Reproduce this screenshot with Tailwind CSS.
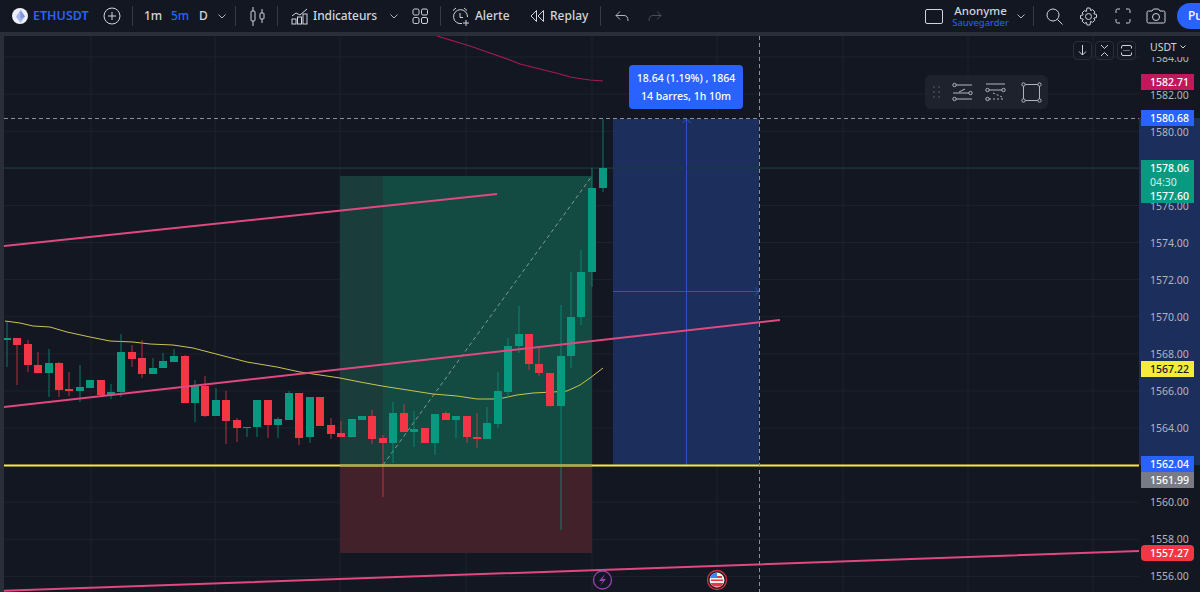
<!DOCTYPE html>
<html lang="fr">
<head>
<meta charset="UTF-8" />
<title>ETHUSDT</title>
<script src="https://cdn.jsdelivr.net/npm/@tailwindcss/browser@4"></script>
</head>
<body class="bg-[#131722] text-[#d1d4dc] font-['Noto_Sans',sans-serif] overflow-hidden">
<div class="w-[1200px] h-[592px] flex flex-col overflow-hidden">

  <!-- top toolbar -->
  <header class="h-8 flex items-center shrink-0 text-[12px] font-medium whitespace-nowrap *:shrink-0">
    <span class="ml-3 w-4 h-4 rounded-full bg-[#eef0f8] flex items-center justify-center">
      <svg width="9" height="13" viewBox="0 0 9 13"><path d="M4.500 0 9 6.500 4.500 13 0 6.500z" fill="#a9b8ee"/><path d="M4.500 0 9 6.500 4.500 9z" fill="#7f93e0"/></svg>
    </span>
    <span class="ml-[5px] w-[58px] text-[12.500px] text-[#2962ff] font-semibold">ETHUSDT</span>
    <svg class="ml-[12px]" width="18" height="18" viewBox="0 0 18 18" fill="none" stroke="#d1d4dc"><circle cx="9" cy="9" r="8"/><path d="M9 5v8M5 9h8"/></svg>
    <span class="ml-[11px] w-px h-5 bg-[#363a45]"></span>
    <span class="ml-[11px] w-4">1m</span>
    <span class="ml-[11px] w-[17px] text-[#2962ff]">5m</span>
    <span class="ml-[11px] w-2">D</span>
    <svg class="ml-[11px]" width="8" height="5" viewBox="0 0 8 5" fill="none" stroke="#b2b5be"><path d="M.5.5 4 4 7.5.5"/></svg>
    <span class="ml-[9px] w-px h-5 bg-[#363a45]"></span>
    <svg class="ml-[14px]" width="15" height="19" viewBox="0 0 15 19" fill="none" stroke="#d1d4dc"><rect x="1" y="4" width="4" height="10" rx="1"/><path d="M3 0v4M3 14v5"/><rect x="10" y="6" width="4" height="6" rx="1"/><path d="M12 2v4M12 12v4"/></svg>
    <span class="ml-[12px] w-px h-5 bg-[#363a45]"></span>
    <svg class="ml-[13px]" width="17" height="17" viewBox="0 0 17 17" fill="none" stroke="#d1d4dc"><path d="M1 8l4-3 4 2 7-6"/><rect x="1" y="11" width="4" height="5"/><rect x="6.500" y="9" width="4" height="7"/><rect x="12" y="6" width="4" height="10"/></svg>
    <span class="ml-[5px] w-[64px] tracking-[-0.1px]">Indicateurs</span>
    <svg class="ml-[13px]" width="8" height="5" viewBox="0 0 8 5" fill="none" stroke="#b2b5be"><path d="M.5.5 4 4 7.5.5"/></svg>
    <svg class="ml-[14px]" width="16" height="16" viewBox="0 0 16 16" fill="none" stroke="#d1d4dc"><rect x="1" y="1" width="6" height="6" rx="1.500"/><rect x="9.500" y="1" width="6" height="6" rx="1.500"/><rect x="1" y="9.500" width="6" height="6" rx="1.500"/><rect x="9.500" y="9.500" width="6" height="6" rx="1.500"/></svg>
    <span class="ml-[12px] w-px h-5 bg-[#363a45]"></span>
    <svg class="ml-[11px]" width="18" height="19" viewBox="0 0 18 19" fill="none" stroke="#d1d4dc"><path d="M10 16.500A7 7 0 1 1 15.500 10"/><path d="M8 6v4.500h3M1 3.500 4 1M15 3.500 12 1M14 13v6M11 16h6"/></svg>
    <span class="ml-[5px] w-[36px]">Alerte</span>
    <svg class="ml-[19px]" width="14" height="12" viewBox="0 0 14 12" fill="none" stroke="#d1d4dc"><path d="M6.500.500 1 6l5.500 5.500zM13.500.500 8 6l5.500 5.500z"/></svg>
    <span class="ml-[6px] w-[38px]">Replay</span>
    <span class="ml-3 w-px h-5 bg-[#363a45]"></span>
    <svg class="ml-[14px]" width="14" height="11" viewBox="0 0 14 11" fill="none" stroke="#b2b5be"><path d="M5 .500 1 4.500l4 4M1 4.500h8c3 0 4 2 4 5.500"/></svg>
    <svg class="ml-[19px]" width="14" height="11" viewBox="0 0 14 11" fill="none" stroke="#4a4e59"><path d="M9 .500l4 4-4 4M13 4.500H5C2 4.500 1 6.500 1 10"/></svg>

    <svg class="ml-[263px]" width="18" height="15" viewBox="0 0 18 15" fill="none" stroke="#d1d4dc"><rect x=".5" y=".5" width="17" height="14" rx="1.500"/></svg>
    <span class="ml-3 w-[51px] flex flex-col items-center">
      <span class="text-[11.500px] leading-[12px]">Anonyme</span>
      <span class="text-[9.500px] leading-[11px] font-normal text-[#2962ff]">Sauvegarder</span>
    </span>
    <svg class="ml-[11px]" width="8" height="5" viewBox="0 0 8 5" fill="none" stroke="#b2b5be"><path d="M.5.5 4 4 7.5.5"/></svg>
    <span class="ml-2 w-px h-5 bg-[#363a45]"></span>
    <svg class="ml-3" width="17" height="17" viewBox="0 0 17 17" fill="none" stroke="#d1d4dc"><circle cx="7" cy="7" r="6"/><path d="m11.500 11.500 5 5"/></svg>
    <svg class="ml-[16px]" width="19" height="19" viewBox="0 0 19 19" fill="none" stroke="#d1d4dc"><circle cx="9.500" cy="9.500" r="3"/><path d="M8 1h3l.6 2.500 2-.9 2.200 2.200-1 2 2.700.7v3l-2.700.7 1 2-2.200 2.200-2-1L11 18H8l-.6-2.600-2 1-2.200-2.200 1-2L1.500 11.500v-3l2.700-.7-1-2 2.200-2.200 2 .9z"/></svg>
    <svg class="ml-[17px]" width="16" height="16" viewBox="0 0 16 16" fill="none" stroke="#d1d4dc"><path d="M1 5V2.500A1.500 1.500 0 0 1 2.500 1H5M11 1h2.500A1.500 1.500 0 0 1 15 2.500V5M15 11v2.500a1.500 1.500 0 0 1-1.500 1.500H11M5 15H2.500A1.500 1.500 0 0 1 1 13.500V11"/></svg>
    <svg class="ml-[15px]" width="20" height="16" viewBox="0 0 20 16" fill="none" stroke="#d1d4dc"><path d="M1 4.500A1.500 1.500 0 0 1 2.500 3H6l1.500-2h5L14 3h3.500A1.500 1.500 0 0 1 19 4.500v9a1.500 1.500 0 0 1-1.500 1.500h-15A1.500 1.500 0 0 1 1 13.500z"/><circle cx="10" cy="9" r="3.500"/></svg>
    <span class="ml-[11px] w-[23px] h-[26px] rounded-l-[13px] bg-[#2962ff] text-white pl-[11px] flex items-center">Pu</span>
  </header>
  <div class="h-1 shrink-0 bg-[#2a2e39]"></div>

  <!-- chart and price scale -->
  <main class="flex flex-1 min-h-0">
    <div class="w-1 shrink-0 bg-[#2a2e39]"></div>
    <section class="relative w-[1135px] shrink-0 overflow-hidden">
      <svg id="chart" class="absolute inset-0" width="1135" height="556" viewBox="4 36 1135 556"></svg>

      <div class="absolute left-[1069px] top-[5px] flex gap-[3px]">
        <span class="w-[19px] h-[19px] rounded border border-[#2a2e39] flex items-center justify-center">
          <svg width="9" height="11" viewBox="0 0 9 11" fill="none" stroke="#d1d4dc"><path d="M4.500 0v10M1 6.500l3.500 3.500L8 6.500"/></svg>
        </span>
        <span class="w-[19px] h-[19px] rounded border border-[#2a2e39] flex items-center justify-center">
          <svg width="9" height="13" viewBox="0 0 9 13" fill="none" stroke="#d1d4dc"><path d="m1 1 3.500 3.500L8 1M1 12l3.500-3.500L8 12"/></svg>
        </span>
        <span class="w-[19px] h-[19px] rounded border border-[#2a2e39] flex items-center justify-center">
          <svg width="11" height="11" viewBox="0 0 11 11" fill="none" stroke="#d1d4dc"><path d="M.5 3.500V2A1.500 1.500 0 0 1 2 .5h7A1.500 1.500 0 0 1 10.500 2v1.500M10.500 7.500V9A1.500 1.500 0 0 1 9 10.500H2A1.500 1.500 0 0 1 .5 9V7.500"/><path d="M2 5.500h7" stroke="#6a6e79"/></svg>
        </span>
      </div>

      <div class="absolute left-[625px] top-[29px] w-[114px] h-[44px] rounded bg-[#2962ff] text-white text-[10.500px] font-medium leading-[18px] flex flex-col items-center justify-center whitespace-nowrap">
        <span>18.64 (1.19%) , 1864</span>
        <span>14 barres, 1h 10m</span>
      </div>

      <div class="absolute left-[921px] top-[39px] w-[123px] h-[34px] rounded-md bg-[#1e222d] flex items-center">
        <svg class="ml-2" width="8" height="12" viewBox="0 0 8 12" fill="#4a4e59"><circle cx="1" cy="1" r="1"/><circle cx="6" cy="1" r="1"/><circle cx="1" cy="6" r="1"/><circle cx="6" cy="6" r="1"/><circle cx="1" cy="11" r="1"/><circle cx="6" cy="11" r="1"/></svg>
        <svg class="ml-[11px]" width="21" height="20" viewBox="0 0 21 20" fill="none" stroke="#b2b5be"><circle cx="2.500" cy="3" r="1.700"/><path d="M4 3h16M7 10l6-3" /><circle cx="18.500" cy="11" r="1.700"/><path d="M1 11h16"/><circle cx="2.500" cy="17" r="1.700"/><path d="M4 17h16"/></svg>
        <svg class="ml-[12px]" width="21" height="20" viewBox="0 0 21 20" fill="none" stroke="#b2b5be"><path d="M1 2h19"/><circle cx="2.500" cy="8" r="1.700"/><path d="M4 8h13"/><circle cx="18.500" cy="8" r="1.700"/><circle cx="2.500" cy="17" r="1.700"/><path d="M4 17h16M8 11l9 4" stroke-dasharray="2 2"/></svg>
        <svg class="ml-[15px]" width="21" height="21" viewBox="0 0 21 21" fill="none" stroke="#b2b5be"><rect x="2.500" y="2.500" width="16" height="16"/><circle cx="2.500" cy="2.500" r="1.700" fill="#1e222d"/><circle cx="18.500" cy="2.500" r="1.700" fill="#1e222d"/><circle cx="2.500" cy="18.500" r="1.700" fill="#1e222d"/><circle cx="18.500" cy="18.500" r="1.700" fill="#1e222d"/></svg>
      </div>
    </section>

    <!-- price scale -->
    <aside class="relative w-[61px] shrink-0 text-[10.500px] text-[#b2b5be] leading-4">
      <div class="absolute left-0 right-0 top-[82px] h-[347px] bg-[#1b2e5c]"></div>
      <span class="absolute left-[11px] top-[3px] flex items-center gap-[3px] text-[#d1d4dc]">USDT
        <svg width="6" height="4" viewBox="0 0 6 4" fill="none" stroke="#d1d4dc"><path d="M.5.5 3 3 5.500.5"/></svg>
      </span>
      <span class="absolute left-[11px] top-[21px] h-[5px] overflow-hidden"><span class="block -mt-[7px]">1584.00</span></span>
      <span class="absolute left-[11px] top-[51px]">1582.00</span>
      <span class="absolute left-[11px] top-[88px]">1580.00</span>
      <span class="absolute left-[11px] top-[162px]">1576.00</span>
      <span class="absolute left-[11px] top-[199px]">1574.00</span>
      <span class="absolute left-[11px] top-[236px]">1572.00</span>
      <span class="absolute left-[11px] top-[273px]">1570.00</span>
      <span class="absolute left-[11px] top-[310px]">1568.00</span>
      <span class="absolute left-[11px] top-[347px]">1566.00</span>
      <span class="absolute left-[11px] top-[384px]">1564.00</span>
      <span class="absolute left-[11px] top-[458px]">1560.00</span>
      <span class="absolute left-[11px] top-[495px]">1558.00</span>
      <span class="absolute left-[11px] top-[532px]">1556.00</span>

      <span class="absolute left-[2px] w-[53px] top-[38px] h-4 pl-[9px] font-medium bg-[#c2185b] text-white">1582.71</span>
      <span class="absolute left-[2px] w-[53px] top-[74px] h-4 pl-[9px] font-medium bg-[#2962ff] text-white">1580.68</span>
      <span class="absolute left-[2px] w-[53px] top-[124px] h-[43px] pl-[9px] pt-[1px] font-medium bg-[#089981] text-white leading-[14px] flex flex-col">
        <span>1578.06</span><span class="font-normal text-[#d5efe9]">04:30</span><span>1577.60</span>
      </span>
      <span class="absolute left-[2px] w-[53px] top-[325px] h-4 pl-[9px] font-medium bg-[#f5eb3b] text-[#131722]">1567.22</span>
      <span class="absolute left-[2px] w-[53px] top-[420px] h-4 pl-[9px] font-medium bg-[#2962ff] text-white">1562.04</span>
      <span class="absolute left-[2px] w-[53px] top-[436px] h-4 pl-[9px] font-medium bg-[#787b86] text-white">1561.99</span>
      <span class="absolute left-[2px] w-[53px] top-[509px] h-4 pl-[9px] font-medium rounded-sm bg-[#f23645] text-white">1557.27</span>
    </aside>
  </main>
</div>

<script>
  // x, body top, body bottom, wick top, wick bottom, g/r
  const bars = [
    [7,338,340,322,367,'g'],[17,338,345,338,385,'r'],[28,344,365,340,372,'r'],[38,365,373,352,373,'r'],
    [49,363,373,349,397,'g'],[59,363,390,362,397,'r'],[69,389,391,372,396,'r'],[80,387,391,365,402,'g'],
    [90,380,388,380,388,'g'],[101,380,395,380,395,'r'],[111,392,395,384,399,'g'],[121,352,392,334,397,'g'],
    [132,352,359,345,367,'r'],[142,358,374,340,378,'r'],[153,368,374,358,374,'g'],[163,361,368,353,368,'g'],
    [174,356,362,349,362,'g'],[185,356,403,355,403,'r'],[195,386,403,380,422,'g'],[205,386,416,376,417,'r'],
    [216,400,416,388,416,'g'],[226,400,421,391,444,'r'],[237,420,428,418,442,'r'],[247,427,428,427,437,'g'],
    [257,400,427,400,437,'g'],[268,400,425,400,438,'r'],[278,419,425,417,438,'g'],[289,393,420,391,420,'g'],
    [299,393,438,393,445,'r'],[310,397,437,397,443,'g'],[320,397,426,397,426,'r'],[331,425,434,418,439,'r'],
    [341,433,437,421,437,'r'],[352,419,437,419,437,'g'],[362,416,420,416,420,'g'],[372,416,439,410,444,'r'],
    [383,438,443,435,497,'r'],[393,413,443,402,463,'g'],[404,413,432,404,432,'r'],[414,429,432,411,447,'g'],
    [425,428,443,428,443,'r'],[435,414,443,414,455,'g'],[446,413,420,411,420,'r'],[456,416,420,416,438,'g'],
    [467,416,437,416,443,'r'],[477,437,439,413,448,'r'],[487,423,439,407,439,'g'],[498,391,424,372,428,'g'],
    [508,346,392,338,397,'g'],[519,334,346,306,353,'g'],[529,334,364,334,370,'r'],[539,364,373,348,376,'r'],
    [550,373,406,373,407,'r'],[561,356,406,305,530,'g'],[571,317,356,272,368,'g'],[581,272,317,250,325,'g'],
    [592,188,272,168,287,'g'],[603,168,188,119,192,'g']
  ];
  const col = { g: '#089981', r: '#f23645' };

  let s = '';
  // grid
  for (const x of [91,215,340,466,592,717,843,968,1093])
    s += `<path d="M${x} 36V592" stroke="#1e222d"/>`;
  for (let y = 57; y < 592; y += 37.1)
    s += `<path d="M4 ${y.toFixed(1)}H1139" stroke="#1e222d"/>`;

  // long position tool
  s += `<rect x="340" y="176" width="252" height="289" fill="#1a3d3b"/>`;
  s += `<rect x="383" y="176" width="209" height="289" fill="#134a42"/>`;
  s += `<rect x="340" y="466" width="252" height="87" fill="#43212a"/>`;

  // date and price range tool
  s += `<rect x="613" y="119" width="146" height="346" fill="#1b2e5c"/>`;
  s += `<path d="M686.500 119V465M613 291.500H759" stroke="#2a55c0"/>`;
  s += `<path d="M682.500 123 686.500 119 690.500 123M755 287.500 759 291.500 755 295.500" stroke="#2a55c0" fill="none"/>`;

  // last price line
  s += `<path d="M4 168H1139" stroke="#1b3f3f"/>`;

  // diagonal of the position
  s += `<path d="M383 465 592 176" stroke="#7d9a96" stroke-dasharray="4 3" fill="none"/>`;

  // moving averages
  s += `<path d="M5 321 20 323 33 326 50 327 67 332 90 337 110 341 133 342 150 344 173 345 193 348 220 355 247 362 277 367 300 372 340 378 360 382 382 386 433 394 457 396 477 399 493 399 503 398 517 395 533 393 553 392 567 391 580 385 590 378 603 368" stroke="#c9c450" stroke-width="1" stroke-linejoin="round" fill="none"/>`;
  s += `<path d="M437 36 470 46 490 53 510 60 520 64 540 69 560 74 570 77 583 79 590 80 603 81" stroke="#a11d52" stroke-width="1.200" stroke-linejoin="round" fill="none"/>`;

  // candles
  for (const [x, t, b, wt, wb, c] of bars) {
    s += `<rect x="${x - 0.5}" y="${wt}" width="1" height="${wb - wt}" fill="${col[c]}" opacity="0.75"/>`;
    s += `<rect x="${x - 4}" y="${t}" width="8" height="${b - t}" fill="${col[c]}"/>`;
  }

  // trend lines, drawn over the candles
  s += `<path d="M4 246 497 194M4 407 780 320M0 591 1139 551" stroke="#e0487f" stroke-width="2" fill="none"/>`;
  s += `<path d="M4 465.500H1139" stroke="#f5eb3b" stroke-width="2"/>`;
  s += `<path d="M340 465.500H592" stroke="#a8a66a" stroke-width="2"/>`;

  // crosshair
  s += `<path d="M4 118.500H1139M759.500 36V592" stroke="#8a8e99" stroke-dasharray="4 3" fill="none"/>`;

  // session markers on the time axis
  s += `<circle cx="602.500" cy="580" r="9" fill="#131722" stroke="#9c3fb5" stroke-width="1.300"/>`;
  s += `<path d="M605 574 599 581H603L600 586 606 579H602.500Z" fill="#9c3fb5"/>`;
  s += `<circle cx="717" cy="580" r="9.500" fill="#131722" stroke="#d0333f" stroke-width="1.300"/>`;
  s += `<circle cx="717" cy="580" r="7.500" fill="#f1f1f1"/>`;
  s += `<path d="M710.500 583H723.500L721 586.500H713ZM712 576H722V578H712ZM711 579.500H723V581H711Z" fill="#e5394a"/>`;
  s += `<path d="M717 572.500A7.500 7.500 0 0 0 710 578H717Z" fill="#3f87f0"/>`;

  document.getElementById('chart').innerHTML = s;
</script>
</body>
</html>
